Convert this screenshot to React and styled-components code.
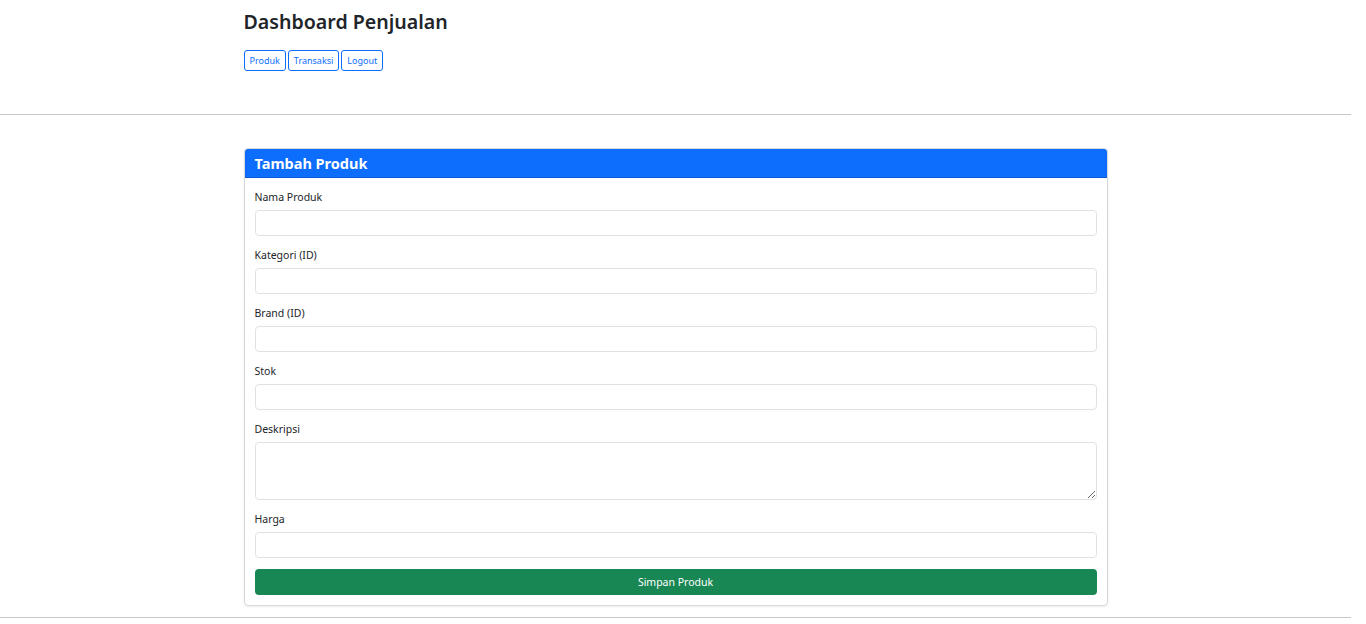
import React from 'react';
import styled, { createGlobalStyle } from 'styled-components';

const GlobalStyle = createGlobalStyle`
	html, body {
		margin: 0;
		padding: 0;
		background: #fff;
	}
	body {
		/* room for the page scrollbar, as in the captured page */
		padding-right: 15px;
		font-family: "Noto Sans", "Open Sans", sans-serif;
		color: #212529;
	}
	* {
		box-sizing: border-box;
	}
`;

const Container = styled.div`
	max-width: 864px;
	margin: 0 auto;
`;

const Header = styled(Container)`
	padding-top: 9px;
	height: 114px;
`;

const Title = styled.h1`
	margin: 0;
	font-size: 19.6px;
	line-height: 25px;
	font-weight: 600;
	color: #212529;
`;

const Nav = styled.nav`
	margin-top: 16px;
	display: flex;
	gap: 2px;
`;

const NavButton = styled.button`
	height: 21px;
	padding: 0 5px;
	font-family: inherit;
	font-size: 9px;
	color: #0d6efd;
	background: #fff;
	border: 1px solid #0d6efd;
	border-radius: 3px;
	cursor: pointer;
`;

const Divider = styled.hr`
	margin: 0;
	border: 0;
	border-top: 1px solid #c8c8c8;
`;

const Main = styled(Container)`
	padding: 33px 0 11px;
`;

const Card = styled.div`
	border: 1px solid #d6d8db;
	border-radius: 4px;
	box-shadow: 0 1px 2px rgba(0, 0, 0, 0.08);
	overflow: hidden;
`;

const CardHeader = styled.div`
	background: #0d6efd;
	color: #fff;
	height: 29px;
	padding: 0 10px;
	display: flex;
	align-items: center;
	font-size: 14.5px;
	font-weight: 700;
	border-bottom: 1px solid #0b5ed7;
`;

const CardBody = styled.form`
	padding: 11px 10px 10px;
	display: flex;
	flex-direction: column;
	gap: 11px;
`;

const Field = styled.div`
	display: flex;
	flex-direction: column;
`;

const Label = styled.label`
	font-size: 10.5px;
	line-height: 16px;
	margin-bottom: 5px;
	color: #212529;
`;

const Input = styled.input`
	height: 26px;
	width: 100%;
	border: 1px solid #dee2e6;
	border-radius: 4px;
	padding: 0 8px;
	font-family: inherit;
	font-size: 11px;
	outline: none;
`;

const TextArea = styled.textarea`
	height: 58px;
	width: 100%;
	border: 1px solid #dee2e6;
	border-radius: 4px;
	padding: 5px 8px;
	font-family: inherit;
	font-size: 11px;
	outline: none;
	display: block;
`;

const SubmitButton = styled.button`
	height: 26px;
	width: 100%;
	border: 0;
	border-radius: 4px;
	background: #198754;
	color: #fff;
	font-family: inherit;
	font-size: 10.5px;
	cursor: pointer;
`;

const Tail = styled.div`
	height: 40px;
`;

const fields = [
	{ label: 'Nama Produk' },
	{ label: 'Kategori (ID)' },
	{ label: 'Brand (ID)' },
	{ label: 'Stok' },
	{ label: 'Deskripsi', area: true },
	{ label: 'Harga' },
];

const App = () => {
	return (
		<>
			<GlobalStyle />
			<Header>
				<Title>Dashboard Penjualan</Title>
				<Nav>
					<NavButton>Produk</NavButton>
					<NavButton>Transaksi</NavButton>
					<NavButton>Logout</NavButton>
				</Nav>
			</Header>
			<Divider />
			<Main>
				<Card>
					<CardHeader>Tambah Produk</CardHeader>
					<CardBody onSubmit={e => e.preventDefault()}>
						{fields.map(f => (
							<Field key={f.label}>
								<Label>{f.label}</Label>
								{f.area ? <TextArea /> : <Input type="text" />}
							</Field>
						))}
						<SubmitButton type="submit">Simpan Produk</SubmitButton>
					</CardBody>
				</Card>
			</Main>
			<Divider />
			<Tail />
		</>
	);
};

export default App;
